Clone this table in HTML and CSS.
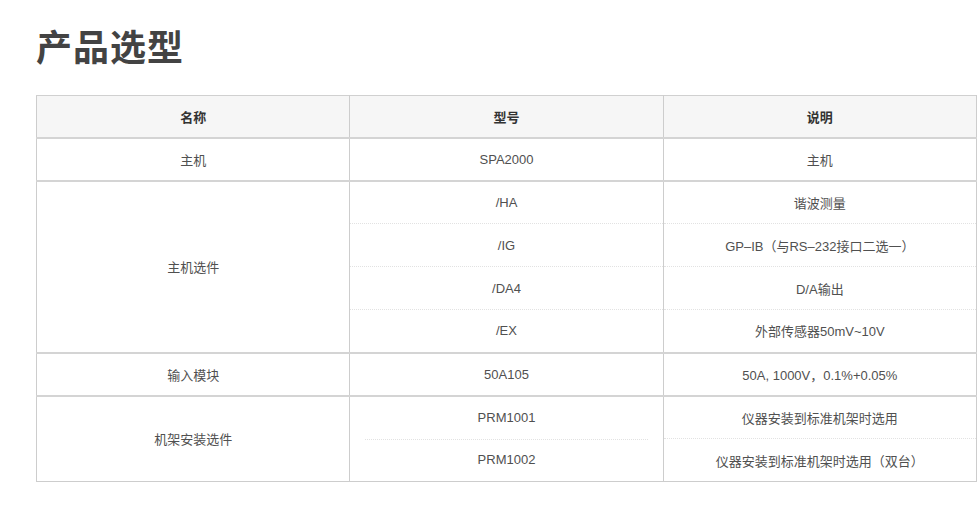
FILE: index.html
```html
<!DOCTYPE html>
<html lang="zh-CN">
<head>
<meta charset="utf-8">
<title>产品选型</title>
<link rel="stylesheet" href="styles.css">
</head>
<body>
<h1 class="title">产品选型</h1>
<table class="spec">
  <thead>
    <tr><th>名称</th><th>型号</th><th>说明</th></tr>
  </thead>
  <tbody>
    <tr class="grp"><td>主机</td><td>SPA2000</td><td>主机</td></tr>
    <tr class="grp"><td rowspan="4">主机选件</td><td>/HA</td><td>谐波测量</td></tr>
    <tr class="sub"><td>/IG</td><td>GP–IB（与RS–232接口二选一）</td></tr>
    <tr class="sub"><td>/DA4</td><td>D/A输出</td></tr>
    <tr class="sub"><td>/EX</td><td>外部传感器50mV~10V</td></tr>
    <tr class="grp"><td>输入模块</td><td>50A105</td><td>50A, 1000V，0.1%+0.05%</td></tr>
    <tr class="grp"><td rowspan="2" class="end">机架安装选件</td><td>PRM1001</td><td>仪器安装到标准机架时选用</td></tr>
    <tr class="sub inset end-row"><td>PRM1002</td><td>仪器安装到标准机架时选用（双台）</td></tr>
  </tbody>
</table>
</body>
</html>
```
FILE: styles.css
```css
html, body {
  margin: 0;
  padding: 0;
  background: #fff;
}
body {
  padding: 19px 0 0 36px;
  font-family: "Liberation Sans", "Noto Sans CJK SC", sans-serif;
  color: #505050;
}
.title {
  margin: 0 0 24px 0;
  font-family: "Noto Sans CJK SC", sans-serif;
  font-size: 36px;
  line-height: 52px;
  font-weight: 700;
  color: #434343;
  letter-spacing: 1px;
}
.spec {
  width: 941px;
  border-collapse: collapse;
  table-layout: fixed;
  font-size: 13px;
}
.spec th,
.spec td {
  height: 43px;
  box-sizing: border-box;
  padding: 0;
  text-align: center;
  vertical-align: middle;
  border-left: 1px solid #cdcdcd;
  border-right: 1px solid #cdcdcd;
}
.spec th {
  height: 42px;
  background: #f6f6f6;
  font-weight: 700;
  color: #333;
  border-top: 1px solid #d0d0d0;
  border-bottom: 2px solid #d4d4d4;
}
.spec tr.grp td {
  border-top: 2px solid #d4d4d4;
}
.spec tr.sub td {
  border-top: 1px dotted #e2e2e2;
}
.spec tr.end-row td,
.spec td.end {
  border-bottom: 1px solid #cdcdcd;
}
.spec tr.inset td:first-child {
  border-top: 0;
  background-image: repeating-linear-gradient(to right, #e2e2e2 0 1px, transparent 1px 2px);
  background-size: calc(100% - 30px) 1px;
  background-position: center top;
  background-repeat: no-repeat;
}
```
